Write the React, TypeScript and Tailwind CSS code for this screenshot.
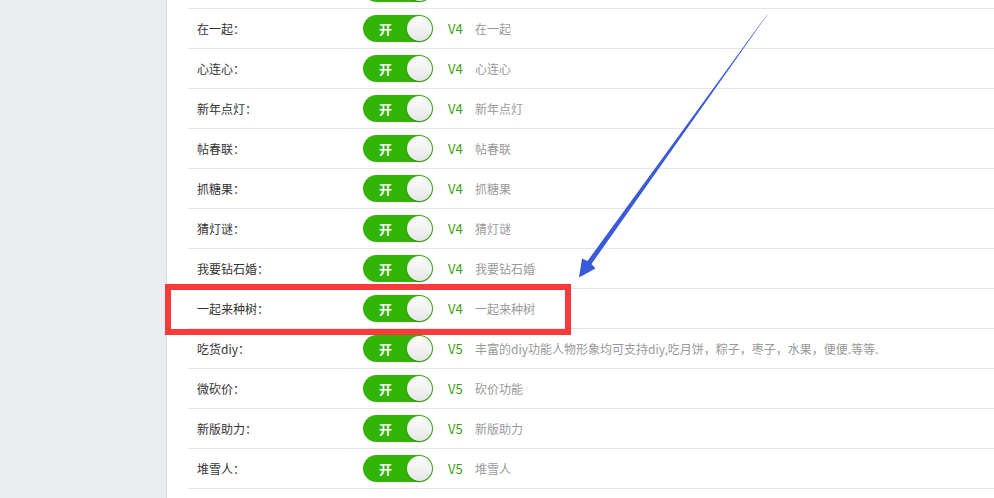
const rows: { label: string; ver: string; desc: string }[] = [
  { label: '', ver: '', desc: '' },
  { label: '在一起：', ver: 'V4', desc: '在一起' },
  { label: '心连心：', ver: 'V4', desc: '心连心' },
  { label: '新年点灯：', ver: 'V4', desc: '新年点灯' },
  { label: '帖春联：', ver: 'V4', desc: '帖春联' },
  { label: '抓糖果：', ver: 'V4', desc: '抓糖果' },
  { label: '猜灯谜：', ver: 'V4', desc: '猜灯谜' },
  { label: '我要钻石婚：', ver: 'V4', desc: '我要钻石婚' },
  { label: '一起来种树：', ver: 'V4', desc: '一起来种树' },
  { label: '吃货diy：', ver: 'V5', desc: '丰富的diy功能人物形象均可支持diy,吃月饼，粽子，枣子，水果，便便.等等.' },
  { label: '微砍价：', ver: 'V5', desc: '砍价功能' },
  { label: '新版助力：', ver: 'V5', desc: '新版助力' },
  { label: '堆雪人：', ver: 'V5', desc: '堆雪人' },
];

function Toggle({ text }: { text: boolean }) {
  return (
    <div className="relative flex h-[27px] w-[70px] items-center rounded-full bg-[#31b404]">
      {text && <span className="pl-[16px] text-[13px] font-bold leading-none text-white">开</span>}
      <span className="absolute right-[1px] top-[1px] h-[25px] w-[25px] rounded-full bg-gradient-to-b from-[#fdfdfd] to-[#e6e6e6] shadow-[0_1px_2px_rgba(0,0,0,0.25)]" />
    </div>
  );
}

export default function App() {
  return (
    <div
      className="relative flex h-[498px] w-full overflow-hidden bg-white text-[12px]"
      style={{ fontFamily: '"Noto Sans CJK SC", "Noto Sans", sans-serif' }}
    >
      <aside className="w-[167px] shrink-0 border-r border-[#dcdfe5] bg-[#eaecf0]" />
      <main className="flex-1 pl-[21px]">
        <div className="-mt-[31px]">
          {rows.map((r, i) => (
            <div key={i} className="flex h-10 items-center border-b border-[#e5e5e5]">
              <div className="w-[175px] shrink-0 pl-[9px] text-[#333]">{r.label}</div>
              <Toggle text={i > 0} />
              <span className="ml-[15px] w-[27px] text-[13px] text-[#3a9f0a]">{r.ver}</span>
              <span className="text-[#999]">{r.desc}</span>
            </div>
          ))}
        </div>
      </main>

      {/* annotation overlays */}
      <div className="pointer-events-none absolute left-[165px] top-[284px] h-[51px] w-[406px] border-[6px] border-[#f83a3a]" />
      <svg className="pointer-events-none absolute left-0 top-0" width="994" height="498">
        <polygon
          points="767.5,14.5 591.5,264 595.5,268.5 579,277.5 582,258.5 587.5,261 766.8,15"
          fill="#3a5bd7"
        />
      </svg>
    </div>
  );
}
